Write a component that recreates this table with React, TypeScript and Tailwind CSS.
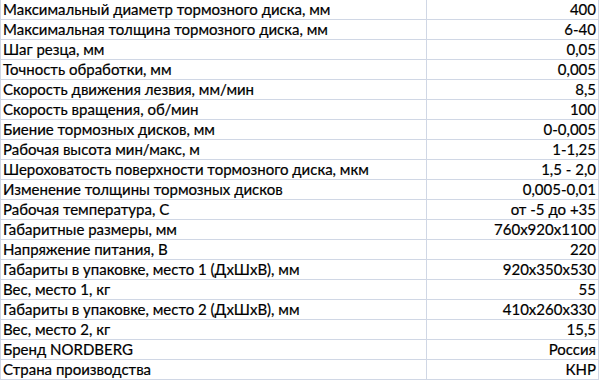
import React from "react";

const rows: [string, string][] = [
  ["Максимальный диаметр тормозного диска, мм", "400"],
  ["Максимальная толщина тормозного диска, мм", "6-40"],
  ["Шаг резца, мм", "0,05"],
  ["Точность обработки, мм", "0,005"],
  ["Скорость движения лезвия, мм/мин", "8,5"],
  ["Скорость вращения, об/мин", "100"],
  ["Биение тормозных дисков, мм", "0-0,005"],
  ["Рабочая высота мин/макс, м", "1-1,25"],
  ["Шероховатость поверхности тормозного диска, мкм", "1,5 - 2,0"],
  ["Изменение толщины тормозных дисков", "0,005-0,01"],
  ["Рабочая температура, С", "от -5 до +35"],
  ["Габаритные размеры, мм", "760x920x1100"],
  ["Напряжение питания, В", "220"],
  ["Габариты в упаковке, место 1 (ДхШхВ), мм", "920x350x530"],
  ["Вес, место 1, кг", "55"],
  ["Габариты в упаковке, место 2 (ДхШхВ), мм", "410x260x330"],
  ["Вес, место 2, кг", "15,5"],
  ["Бренд NORDBERG", "Россия"],
  ["Страна производства", "КНР"],
];

export default function App() {
  return (
    <div className="w-[600px] h-[381px] bg-white text-black" style={{ fontFamily: "Lato, 'Open Sans', sans-serif" }}>
      <div className="w-[599px] flex flex-col border-r border-[#d0d7e5]">
        {rows.map(([k, v], i) => (
          <div key={i} className="flex h-[20px] border-b border-[#d0d7e5] text-[15px] leading-[19px] [-webkit-text-stroke:0.2px_black]">
            <div className="w-[426px] border-l border-[#d0d7e5] pl-[2px] whitespace-nowrap overflow-hidden">{k}</div>
            <div className="w-[172px] border-l border-[#d0d7e5] pr-[2px] text-right whitespace-nowrap overflow-hidden">{v}</div>
          </div>
        ))}
      </div>
    </div>
  );
}
